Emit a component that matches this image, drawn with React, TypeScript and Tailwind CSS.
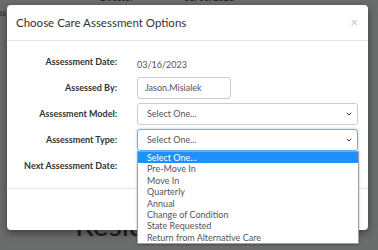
import { ChevronDown } from 'lucide-react';

const typeOptions = [
  'Select One...',
  'Pre-Move In',
  'Move In',
  'Quarterly',
  'Annual',
  'Change of Condition',
  'State Requested',
  'Return from Alternative Care',
];

function Row({ label, children }: { label: string; children: React.ReactNode }) {
  return (
    <div className="flex h-[22px] items-center">
      <div className="w-[110px] shrink-0 whitespace-nowrap text-right text-[9px] font-bold text-[#333]">{label}</div>
      <div className="ml-[20px] flex-1">{children}</div>
    </div>
  );
}

function SelectBox({ focused }: { focused?: boolean }) {
  return (
    <div
      className={
        focused
          ? 'flex h-[22px] items-center justify-between rounded-[3px] border border-[#66afe9] pl-[9px] pr-[4px] text-[9px] text-[#555] shadow-[0_0_3px_rgba(102,175,233,0.6)]'
          : 'flex h-[22px] items-center justify-between rounded-[3px] border border-[#ccc] pl-[9px] pr-[4px] text-[9px] text-[#555]'
      }
    >
      <span>Select One...</span>
      <ChevronDown className="h-[8px] w-[8px] text-[#333]" strokeWidth={3} />
    </div>
  );
}

export default function App() {
  return (
    <div
      className="relative h-[250px] w-[378px] overflow-hidden bg-[#6b6d6c]"
      style={{ fontFamily: 'Lato, "Open Sans", sans-serif' }}
    >
      {/* page behind the overlay */}
      <div className="absolute left-[-3px] top-[6px] text-[9px] text-[#2a2a2a]">us</div>
      <div className="absolute left-[100px] top-[-9px] text-[9px] font-bold text-[#2a2a2a]">Director</div>
      <div className="absolute left-[184px] top-[-9px] text-[9px] font-bold text-[#2a2a2a]">01/06/2023</div>
      <div className="absolute left-[75px] top-[202px] text-[30px] text-[#1e1e1e]">Residents</div>

      {/* modal */}
      <div className="absolute left-[7px] top-[5px] flex h-[225px] w-[361px] flex-col rounded-[4px] bg-white shadow-[0_3px_8px_rgba(0,0,0,0.45)]">
        <div className="flex h-[36px] items-center justify-between border-b border-[#e5e5e5] pl-[9px] pr-[10px]">
          <span className="text-[11.5px] text-[#333]">Choose Care Assessment Options</span>
          <span className="text-[13px] leading-none text-[#c2c2c2]">×</span>
        </div>

        <div className="flex flex-col gap-[4px] pb-[11px] pr-[10px] pt-[10px]">
          <Row label="Assessment Date:">
            <span className="text-[9px] text-[#555]">03/16/2023</span>
          </Row>
          <Row label="Assessed By:">
            <div className="flex h-[22px] w-[94px] items-center rounded-[3px] border border-[#ccc] pl-[7px] text-[9px] text-[#555]">
              Jason.Misialek
            </div>
          </Row>
          <Row label="Assessment Model:">
            <SelectBox />
          </Row>
          <Row label="Assessment Type:">
            <SelectBox focused />
          </Row>
          <Row label="Next Assessment Date:">
            <span />
          </Row>
        </div>

        <div className="flex-1 border-t border-[#e5e5e5]" />
      </div>

      {/* open dropdown list */}
      <div className="absolute left-[137px] top-[151px] w-[222px] border border-[#a0a0a0] bg-white shadow-[0_1px_2px_rgba(0,0,0,0.3)]">
        {typeOptions.map((opt, i) => (
          <div
            key={opt}
            className={
              i === 0
                ? 'h-[11.4px] bg-[#1e90ff] pl-[9px] text-[9px] leading-[11.4px] text-white'
                : 'h-[11.4px] pl-[9px] text-[9px] leading-[11.4px] text-[#555]'
            }
          >
            {opt}
          </div>
        ))}
      </div>
    </div>
  );
}
